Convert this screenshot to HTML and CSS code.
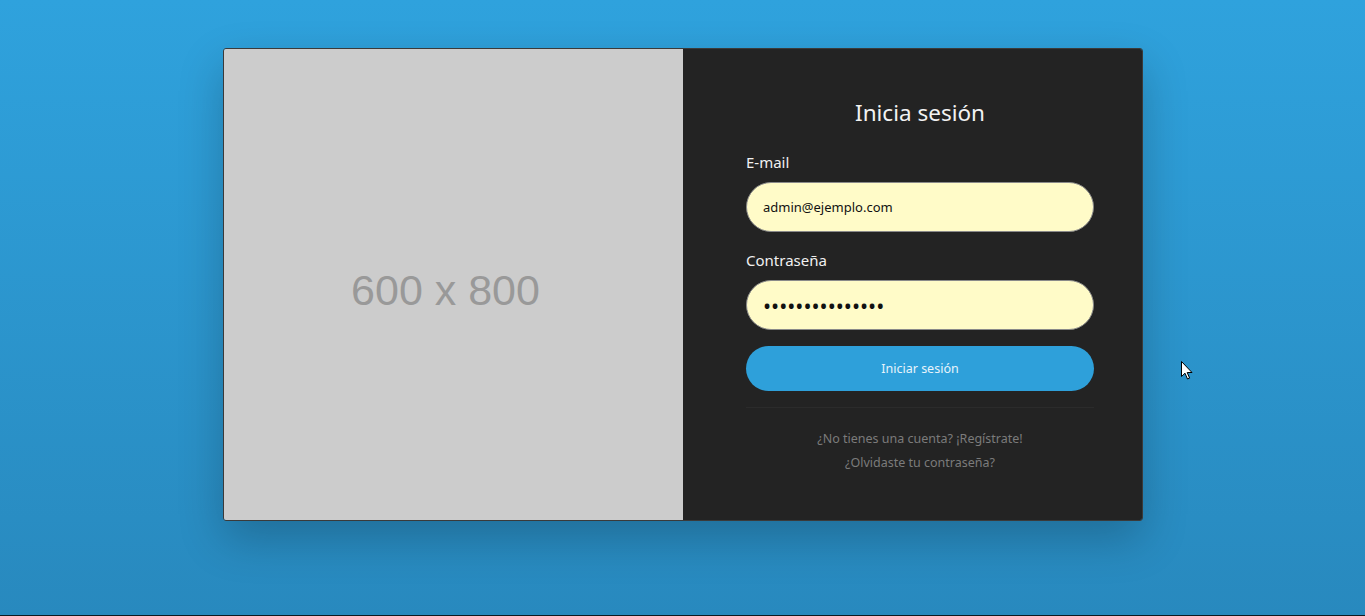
FILE: index.html
```html
<!DOCTYPE html>
<html lang="es">
<head>
<meta charset="utf-8">
<title>Inicia sesión</title>
<link rel="stylesheet" href="styles.css">
</head>
<body>
<main class="page">
  <section class="card">
    <div class="placeholder">600 x 800</div>
    <div class="panel">
      <h1 class="title">Inicia sesión</h1>
      <form class="form">
        <label class="label" for="email">E-mail</label>
        <input class="input" id="email" type="text" value="admin@ejemplo.com">
        <label class="label" for="pass">Contraseña</label>
        <input class="input input-pass" id="pass" type="password" value="123456789012345">
        <button class="btn" type="button">Iniciar sesión</button>
      </form>
      <hr class="sep">
      <div class="links">
        <a href="#">¿No tienes una cuenta? ¡Regístrate!</a>
        <a href="#">¿Olvidaste tu contraseña?</a>
      </div>
    </div>
  </section>
  <svg class="cursor" width="12" height="19" viewBox="0 0 12 19"><path d="M0.5 0.5 L0.5 15.5 L4 12.2 L6.5 18 L8.6 17.1 L6.2 11.5 L11 11.5 Z" fill="#fff" stroke="#000" stroke-width="1"/></svg>
</main>
</body>
</html>
```
FILE: styles.css
```css
* { box-sizing: border-box; }
html, body { margin: 0; height: 100%; }
body {
  background: linear-gradient(180deg, #2fa2dd 0%, #2889be 100%);
  font-family: "Noto Sans", "Open Sans", sans-serif;
  overflow: hidden;
}
.page {
  height: 616px;
  padding-top: 48px;
  display: flex;
  justify-content: center;
  align-items: flex-start;
  padding-left: 1px;
  border-bottom: 1px solid #0d1a22;
}
.card {
  width: 920px;
  height: 473px;
  display: flex;
  border: 1px solid #3a3a3a;
  border-radius: 3px;
  overflow: hidden;
  box-shadow: 0 18px 45px rgba(0, 0, 0, 0.22);
}
.placeholder {
  width: 459px;
  background: #cccccc;
  color: #999999;
  font-family: "Liberation Sans", Arial, sans-serif;
  font-size: 43px;
  display: flex;
  align-items: center;
  justify-content: center;
  padding-right: 16px;
  padding-top: 11px;
}
.panel {
  flex: 1;
  background: #232323;
  padding: 47px 48px 0 63px;
  display: flex;
  flex-direction: column;
}
.title {
  margin: 0;
  text-align: center;
  color: #f2f2f2;
  font-weight: 400;
  font-size: 22.5px;
  line-height: 34px;
}
.form {
  display: flex;
  flex-direction: column;
  margin-top: 21px;
}
.label {
  color: #f0f0f0;
  font-size: 15px;
  line-height: 22px;
  margin-bottom: 9px;
}
.input {
  height: 50px;
  border: 1px solid #8a8a8a;
  border-radius: 25px;
  background: #fffbc8;
  padding: 0 16px;
  font-family: inherit;
  font-size: 13px;
  color: #111;
  margin-bottom: 17px;
  outline: none;
}
.input-pass {
  font-size: 21.5px;
  letter-spacing: 0;
  margin-bottom: 16px;
}
.btn {
  height: 45px;
  border: none;
  border-radius: 23px;
  background: #2ea0da;
  color: #e8f4fb;
  font-family: inherit;
  font-size: 12.5px;
}
.sep {
  margin: 16px 0 0;
  border: none;
  border-top: 1px solid #2b2b2b;
}
.links {
  margin-top: 21px;
  display: flex;
  flex-direction: column;
  align-items: center;
  gap: 4px;
}
.links a {
  color: #7b7b7b;
  text-decoration: none;
  font-size: 12.5px;
  line-height: 20px;
}
.cursor {
  position: absolute;
  left: 1181px;
  top: 361px;
}
```
